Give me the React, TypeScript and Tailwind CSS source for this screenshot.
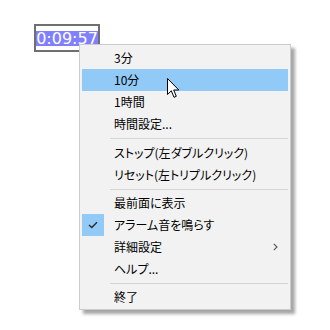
import React from "react";

type Item =
  | { kind: "item"; label: string; checked?: boolean; sub?: boolean; hover?: boolean }
  | { kind: "sep"; h: string };

const items: Item[] = [
  { kind: "item", label: "3分" },
  { kind: "item", label: "10分", hover: true },
  { kind: "item", label: "1時間" },
  { kind: "item", label: "時間設定..." },
  { kind: "sep", h: "h-[7px]" },
  { kind: "item", label: "ストップ(左ダブルクリック)" },
  { kind: "item", label: "リセット(左トリプルクリック)" },
  { kind: "sep", h: "h-[6px]" },
  { kind: "item", label: "最前面に表示" },
  { kind: "item", label: "アラーム音を鳴らす", checked: true },
  { kind: "item", label: "詳細設定", sub: true },
  { kind: "item", label: "ヘルプ..." },
  { kind: "sep", h: "h-[6px]" },
  { kind: "item", label: "終了" },
];

const Check = () => (
  <svg width="10" height="8" viewBox="0 0 10 8" fill="none">
    <path d="M1 4 L3.8 6.6 L9 1.2" stroke="#2b2b2b" strokeWidth="1.4" />
  </svg>
);

const Chevron = () => (
  <svg width="5" height="8" viewBox="0 0 5 8" fill="none">
    <path d="M0.8 0.8 L4 4 L0.8 7.2" stroke="#555" strokeWidth="1.1" />
  </svg>
);

const Cursor = () => (
  <svg width="13" height="21" viewBox="0 0 13 21">
    <path
      d="M0.5 0.5 L0.5 16.5 L4.3 12.8 L7 19.3 L9.3 18.3 L6.7 12 L11.8 12 Z"
      fill="#fff"
      stroke="#000"
      strokeWidth="1"
      strokeLinejoin="miter"
    />
  </svg>
);

export default function App() {
  return (
    <div className="relative h-[330px] w-[330px] overflow-hidden bg-white font-['Noto_Sans_CJK_JP',sans-serif]">
      <div className="pl-[34px] pt-[24px]">
        <div className="flex h-[28px] w-[66px] flex-col border-2 border-[#6f6f6f] bg-white pt-[5px]">
          <div className="flex h-[15px] items-center justify-center bg-[#8080ff] font-['DejaVu_Sans',sans-serif] text-[16px] leading-[15px] text-white">
            0:09:57
          </div>
        </div>
      </div>

      <div className="absolute left-[79px] top-[44px] w-[212px] border border-[#cccccc] bg-[#f2f2f2] px-[2px] pt-[2px] pb-[1px] shadow-[4px_4px_3px_rgba(0,0,0,0.35)] [font-feature-settings:'palt']">
        {items.map((it, i) =>
          it.kind === "sep" ? (
            <div key={i} className={`flex items-center pl-[28px] ${it.h}`}>
              <div className="h-px w-full bg-[#d4d4d4]" />
            </div>
          ) : (
            <div
              key={i}
              className={`flex h-[22px] items-center text-[12px] text-black ${it.hover ? "bg-[#91c9f7]" : ""}`}
            >
              <div
                className={`flex h-[22px] w-[22px] items-center justify-center ${it.checked ? "bg-[#91c9f7]" : ""}`}
              >
                {it.checked && <Check />}
              </div>
              <span className="ml-[10px] flex-1 leading-none">{it.label}</span>
              {it.sub && (
                <span className="mr-[10px] flex items-center">
                  <Chevron />
                </span>
              )}
            </div>
          )
        )}
      </div>

      <div className="absolute left-[167px] top-[78px]">
        <Cursor />
      </div>
    </div>
  );
}
